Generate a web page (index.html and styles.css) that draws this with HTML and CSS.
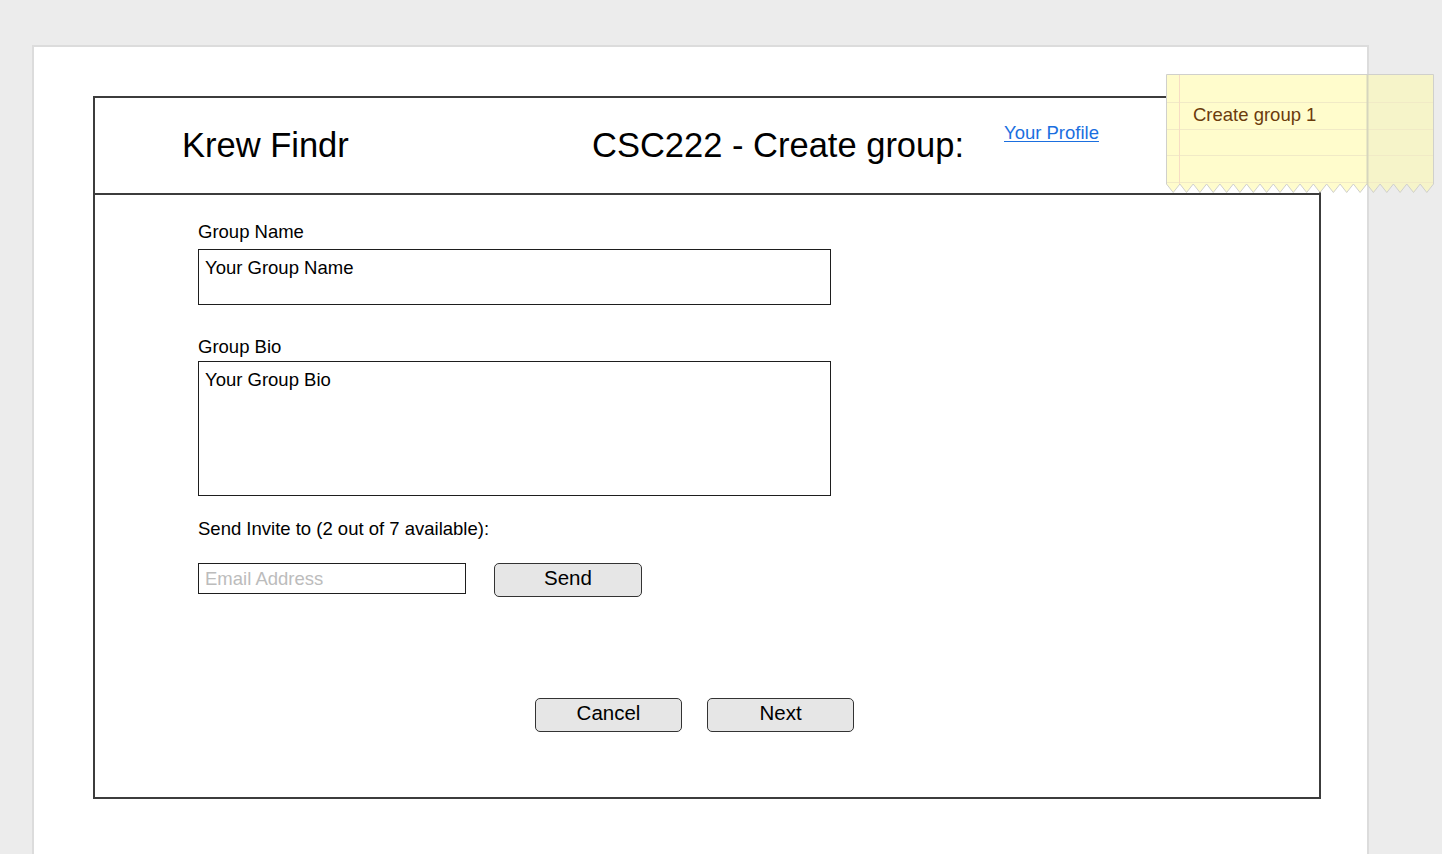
FILE: index.html
```html
<!DOCTYPE html>
<html lang="en">
<head>
<meta charset="utf-8">
<title>Krew Findr - Create group</title>
<link rel="stylesheet" href="styles.css">
</head>
<body>
<div class="page">
  <div class="frame">
    <header class="header">
      <div class="brand">Krew Findr</div>
      <div class="title">CSC222 - Create group:</div>
      <a class="profile" href="#">Your Profile</a>
    </header>
    <main class="content">
      <label class="label first">Group Name</label>
      <div class="field name">Your Group Name</div>
      <label class="label bio-label">Group Bio</label>
      <div class="field bio">Your Group Bio</div>
      <div class="label invite-label">Send Invite to (2 out of 7 available):</div>
      <div class="invite-row">
        <div class="email">Email Address</div>
        <button class="btn send">Send</button>
      </div>
      <div class="actions">
        <button class="btn">Cancel</button>
        <button class="btn">Next</button>
      </div>
    </main>
  </div>
</div>
<div class="sticky">
  <svg class="sticky-bg" width="268" height="120" viewBox="0 0 268 120">
    <defs>
      <clipPath id="note">
        <polygon points="0.5,0.5 267.5,0.5 267.5,110 260.8,118.5 254.2,110 247.5,118.5 240.8,110 234.1,118.5 227.5,110 220.8,118.5 214.1,110 207.4,118.5 200.8,110 194.1,118.5 187.4,110 180.7,118.5 174.1,110 167.4,118.5 160.7,110 154,118.5 147.4,110 140.7,118.5 134,110 127.3,118.5 120.7,110 114,118.5 107.3,110 100.6,118.5 94,110 87.3,118.5 80.6,110 73.9,118.5 67.3,110 60.6,118.5 53.9,110 47.2,118.5 40.6,110 33.9,118.5 27.2,110 20.5,118.5 13.9,110 7.2,118.5 0.5,110"/>
      </clipPath>
    </defs>
    <g clip-path="url(#note)">
      <rect x="0" y="0" width="202" height="120" fill="#fffccc"/>
      <rect x="202" y="0" width="66" height="120" fill="#f6f4c9"/>
      <line x1="0" y1="28.5" x2="268" y2="28.5" stroke="#f1eac6" stroke-width="1"/>
      <line x1="0" y1="55.5" x2="268" y2="55.5" stroke="#f1eac6" stroke-width="1"/>
      <line x1="0" y1="81.5" x2="268" y2="81.5" stroke="#f1eac6" stroke-width="1"/>
      <line x1="0" y1="108.5" x2="268" y2="108.5" stroke="#f1eac6" stroke-width="1"/>
      <line x1="13.5" y1="0" x2="13.5" y2="120" stroke="#f7dcc4" stroke-width="1"/>
      <line x1="201.5" y1="0" x2="201.5" y2="120" stroke="#d6d5bd" stroke-width="2"/>
    </g>
    <polygon fill="none" stroke="#d0d0cc" stroke-width="1" points="0.5,0.5 267.5,0.5 267.5,110 260.8,118.5 254.2,110 247.5,118.5 240.8,110 234.1,118.5 227.5,110 220.8,118.5 214.1,110 207.4,118.5 200.8,110 194.1,118.5 187.4,110 180.7,118.5 174.1,110 167.4,118.5 160.7,110 154,118.5 147.4,110 140.7,118.5 134,110 127.3,118.5 120.7,110 114,118.5 107.3,110 100.6,118.5 94,110 87.3,118.5 80.6,110 73.9,118.5 67.3,110 60.6,118.5 53.9,110 47.2,118.5 40.6,110 33.9,118.5 27.2,110 20.5,118.5 13.9,110 7.2,118.5 0.5,110"/>
  </svg>
  <span class="sticky-text">Create group 1</span>
</div>
</body>
</html>
```

FILE: styles.css
```css
html, body {
  margin: 0;
  padding: 0;
}

body {
  background: #ececec;
  font-family: "Liberation Sans", Arial, Helvetica, sans-serif;
  color: #000;
  height: 854px;
  overflow: hidden;
}

.page {
  margin: 45px 0 0 32px;
  width: 1337px;
  height: 809px;
  background: #fff;
  border: 2px solid #dcdcdc;
  border-bottom: none;
  padding: 49px 0 0 59px;
  box-sizing: border-box;
}

.frame {
  width: 1228px;
  box-sizing: border-box;
  border: 2px solid #3c3c3c;
}

.header {
  display: flex;
  align-items: flex-start;
  height: 97px;
  box-sizing: border-box;
  padding: 27px 0 0 87px;
  border-bottom: 2px solid #3c3c3c;
}

.brand {
  width: 410px;
  font-size: 34.5px;
  line-height: 40px;
}

.title {
  width: 412px;
  font-size: 34.5px;
  line-height: 40px;
}

.profile {
  margin-top: -3px;
  font-size: 18.5px;
  line-height: 22px;
  color: #1b6fdf;
  text-decoration: underline;
  text-underline-offset: 2px;
}

.content {
  display: flex;
  flex-direction: column;
  align-items: flex-start;
  padding: 26px 0 65px 103px;
}

.label {
  font-size: 18.5px;
  line-height: 22px;
}

.field {
  width: 633px;
  box-sizing: border-box;
  border: 1px solid #1e1e1e;
  padding: 7px 0 0 6px;
  font-size: 18.5px;
  line-height: 22px;
}

.name {
  margin-top: 6px;
  height: 56px;
}

.bio-label {
  margin-top: 31px;
}

.bio {
  margin-top: 3px;
  height: 135px;
}

.invite-label {
  margin-top: 22px;
}

.invite-row {
  margin-top: 23px;
  display: flex;
  align-items: flex-start;
  gap: 28px;
}

.email {
  width: 268px;
  height: 31px;
  box-sizing: border-box;
  border: 1px solid #1e1e1e;
  padding: 0 0 0 6px;
  font-size: 18.5px;
  line-height: 29px;
  color: #bcbcbc;
}

.btn {
  display: flex;
  align-items: flex-start;
  justify-content: center;
  width: 148px;
  height: 34px;
  box-sizing: border-box;
  border: 1px solid #333;
  border-radius: 5px;
  background: #e6e6e6;
  font-family: "Liberation Sans", Arial, Helvetica, sans-serif;
  font-size: 20.5px;
  line-height: 24px;
  color: #000;
  padding: 2px 0 0;
  margin: 0;
}

.actions {
  margin: 101px 0 0 337px;
  display: flex;
  gap: 25px;
}

.actions .btn {
  width: 147px;
}

.sticky {
  position: absolute;
  left: 1166px;
  top: 74px;
  width: 268px;
  height: 120px;
}

.sticky-bg {
  position: absolute;
  left: 0;
  top: 0;
  display: block;
}

.sticky-text {
  position: relative;
  display: block;
  padding: 30px 0 0 27px;
  font-size: 18.5px;
  line-height: 22px;
  color: #6b3b0c;
}
```
